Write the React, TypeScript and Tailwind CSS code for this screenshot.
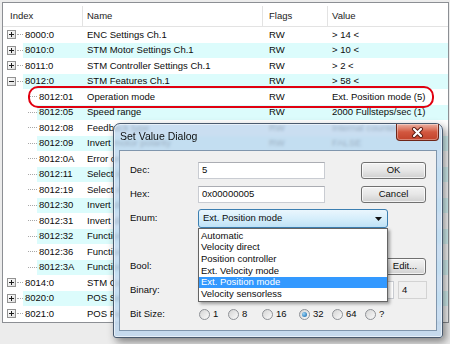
import React from "react";

type Row = { idx: string; name: string; value: string; node?: "+" | "-" };

const rows: Row[] = [
  { idx: "8000:0", name: "ENC Settings Ch.1", value: "> 14 <", node: "+" },
  { idx: "8010:0", name: "STM Motor Settings Ch.1", value: "> 10 <", node: "+" },
  { idx: "8011:0", name: "STM Controller Settings Ch.1", value: "> 2 <", node: "+" },
  { idx: "8012:0", name: "STM Features Ch.1", value: "> 58 <", node: "-" },
  { idx: "8012:01", name: "Operation mode", value: "Ext. Position mode (5)" },
  { idx: "8012:05", name: "Speed range", value: "2000 Fullsteps/sec (1)" },
  { idx: "8012:08", name: "Feedback type", value: "Internal counter (1)" },
  { idx: "8012:09", name: "Invert motor polarity", value: "FALSE" },
  { idx: "8012:0A", name: "Error on step lost counter", value: "FALSE" },
  { idx: "8012:11", name: "Select info data 1", value: "Motor coil voltage A (13)" },
  { idx: "8012:19", name: "Select info data 2", value: "Motor coil voltage B (14)" },
  { idx: "8012:30", name: "Invert digital input 1", value: "FALSE" },
  { idx: "8012:31", name: "Invert digital input 2", value: "FALSE" },
  { idx: "8012:32", name: "Function for input 1", value: "Normal input (0)" },
  { idx: "8012:36", name: "Function for input 2", value: "Normal input (0)" },
  { idx: "8012:3A", name: "Function for input 2", value: "Normal input (0)" },
  { idx: "8014:0", name: "STM Controller Settings 2 Ch.1", value: "> 12 <", node: "+" },
  { idx: "8020:0", name: "POS Settings Ch.1", value: "> 16 <", node: "+" },
  { idx: "8021:0", name: "POS Features Ch.1", value: "> 6 <", node: "+" },
];

const enumItems = [
  "Automatic",
  "Velocity direct",
  "Position controller",
  "Ext. Velocity mode",
  "Ext. Position mode",
  "Velocity sensorless",
];

const TreeBox = ({ open }: { open: boolean }) => (
  <span className="relative flex h-[9px] w-[9px] items-center justify-center border border-[#929292] bg-linear-to-br from-white to-[#dedede]">
    <span className="absolute h-px w-[5px] bg-[#1c1c1c]" />
    {!open && <span className="absolute h-[5px] w-px bg-[#1c1c1c]" />}
  </span>
);

const ListRow = ({ row, shaded }: { row: Row; shaded: boolean }) => {
  const child = !row.node;
  return (
    <div className="flex h-[15.5px] items-center">
      <div className={`flex h-full shrink-0 items-center ${child ? "w-[34px]" : "w-[20px]"}`}>
        {child ? (
          <span className="ml-[25px] w-[9px] border-t border-dotted border-[#a8a8a8]" />
        ) : (
          <>
            <span className="ml-[4px]">
              <TreeBox open={row.node === "-"} />
            </span>
            <span className="ml-px w-[6px] border-t border-dotted border-[#a8a8a8]" />
          </>
        )}
      </div>
      <div className={`flex h-full flex-1 items-center whitespace-nowrap ${shaded ? "bg-[#dcfcfc]" : ""}`}>
        <span className={`shrink-0 pl-[2px] ${child ? "w-[46px]" : "w-[60px]"}`}>{row.idx}</span>
        <span className="w-[180px] shrink-0 overflow-hidden pl-[4px]">{row.name}</span>
        <span className="w-[65px] shrink-0 pl-[6px]">RW</span>
        <span className="pl-[4px]">{row.value}</span>
      </div>
    </div>
  );
};

const Radio = ({ label, checked, w }: { label: string; checked?: boolean; w: string }) => (
  <span className={`flex items-center ${w}`}>
    <span className="flex h-[11px] w-[11px] items-center justify-center rounded-full border border-[#8e9196] bg-linear-to-br from-[#d4d4d4] to-[#fbfbfb]">
      {checked && <span className="h-[5px] w-[5px] rounded-full bg-[radial-gradient(circle_at_35%_35%,#9ad6f8,#0b5ea6)]" />}
    </span>
    <span className="ml-[3px]">{label}</span>
  </span>
);

const btn =
  "flex h-[17px] items-center justify-center rounded-[3px] border border-[#707070] bg-linear-to-b from-[#f3f3f3] via-[#e6e6e6] to-[#d0d0d0] shadow-[inset_0_0_0_1px_rgba(255,255,255,0.7)]";

export default function App() {
  return (
    <div className="relative h-[344px] w-[450px] overflow-hidden bg-[#ececec] font-['Liberation_Sans',Arial,sans-serif] text-[9.5px] text-[#0c0c0c]">
      <div className="ml-[2px] mt-[2px] h-[321px] w-[447px] overflow-hidden border border-[#8c8f94] bg-white">
        <div className="flex h-[24px] items-center border-b border-[#e3e3e3] pt-[3px] text-[#1b1b1b]">
          <span className="flex h-full w-[80px] items-center border-r border-[#e3e3e3] pl-[7px]">Index</span>
          <span className="flex h-full w-[180px] items-center border-r border-[#e3e3e3] pl-[4px]">Name</span>
          <span className="flex h-full w-[65px] items-center border-r border-[#e3e3e3] pl-[6px]">Flags</span>
          <span className="flex h-full items-center pl-[4px]">Value</span>
        </div>
        {rows.map((r, i) => (
          <ListRow key={r.idx + i} row={r} shaded={i % 2 === 1} />
        ))}
      </div>

      {/* red annotation around the selected entry */}
      <div className="absolute left-[28px] top-[86px] h-[22px] w-[406px] rounded-[10px] border-2 border-[#e10010]" />

      {/* Set Value Dialog window */}
      <div className="absolute left-[113px] top-[123px] flex h-[215px] w-[330px] flex-col rounded-t-[7px] rounded-b-[3px] border border-[#4a5a6e] bg-[#bdd6ee]/80 px-[5px] pb-[6px] shadow-[3px_4px_9px_rgba(0,0,0,0.45),inset_0_0_0_1px_rgba(255,255,255,0.55)] backdrop-blur-[1.5px]">
        <div className="flex h-[26px] items-center">
          <span className="pl-[1px] text-[10.5px] text-[#101010]">Set Value Dialog</span>
          <span className="-mr-[2px] ml-auto flex h-[17px] w-[43px] items-center justify-center self-start rounded-b-[4px] border border-t-0 border-[#6e2618] bg-linear-to-b from-[#eab0a2] via-[#d2573f] to-[#c2432b] shadow-[inset_0_0_0_1px_rgba(255,255,255,0.35)]">
            <svg width="13" height="11" viewBox="0 0 13 11">
              <path d="M3 2 L10 9 M10 2 L3 9" stroke="#5a1a10" strokeWidth="4" strokeLinecap="round" />
              <path d="M3 2 L10 9 M10 2 L3 9" stroke="#ffffff" strokeWidth="2.2" strokeLinecap="round" />
            </svg>
          </span>
        </div>

        <div className="flex flex-1 flex-col border border-[#8096ad] bg-[#f0f0f0] pl-[10px] pt-[11px]">
          <div className="flex h-[17px] items-center">
            <span className="w-[68px]">Dec:</span>
            <span className="flex h-full w-[127px] items-center border border-[#c9ccd2] border-t-[#abadb3] bg-white pl-[3px]">5</span>
            <span className={`${btn} ml-[36px] w-[65px] border-[#3c7fb1] from-[#eef8fe] via-[#dcf0fc] to-[#c2e4f8] shadow-[inset_0_0_0_1px_rgba(80,205,250,0.8)]`}>
              OK
            </span>
          </div>
          <div className="mt-[7px] flex h-[17px] items-center">
            <span className="w-[68px]">Hex:</span>
            <span className="flex h-full w-[127px] items-center border border-[#c9ccd2] border-t-[#abadb3] bg-white pl-[3px]">0x00000005</span>
            <span className={`${btn} ml-[36px] w-[65px]`}>Cancel</span>
          </div>
          <div className="mt-[6px] flex h-[19px] items-center">
            <span className="w-[68px]">Enum:</span>
            <div className="relative z-10 h-full w-[190px]">
              <div className="flex h-full items-center rounded-[3px] border border-[#3c7fb1] bg-linear-to-b from-[#eaf6fd] via-[#d6eefb] to-[#bfe2f6] pl-[4px] pr-[5px]">
                <span>Ext. Position mode</span>
                <svg className="ml-auto" width="7" height="4" viewBox="0 0 7 4">
                  <path d="M0 0 H7 L3.5 4 Z" fill="#111" />
                </svg>
              </div>
              <div className="absolute left-0 top-full w-[190px] border border-[#646464] bg-white py-px shadow-[2px_2px_3px_rgba(0,0,0,0.35)]">
                {enumItems.map((t, i) => (
                  <div key={t} className={`flex h-[11.7px] items-center pl-[2px] ${i === 4 ? "bg-[#3399ff] text-white" : ""}`}>
                    {t}
                  </div>
                ))}
              </div>
            </div>
          </div>
          <div className="mt-[30px] flex h-[16px] items-center">
            <span className="w-[68px]">Bool:</span>
            <span className={`${btn} ml-[182px] w-[46px]`}>
              <span className="ml-[4px]">Edit...</span>
            </span>
          </div>
          <div className="mt-[7px] flex h-[18px] items-center">
            <span className="w-[68px]">Binary:</span>
            <span className="h-full w-[196px] border border-[#c9ccd2] bg-white" />
            <span className="ml-[4px] flex h-full w-[29px] items-center border border-[#d3d3d3] bg-[#f0f0f0] pl-[3px]">4</span>
          </div>
          <div className="mt-[9px] flex h-[12px] items-center">
            <span className="w-[69px]">Bit Size:</span>
            <Radio label="1" w="w-[29px]" />
            <Radio label="8" w="w-[34px]" />
            <Radio label="16" w="w-[37px]" />
            <Radio label="32" checked w="w-[33px]" />
            <Radio label="64" w="w-[33px]" />
            <Radio label="?" w="w-[20px]" />
          </div>
        </div>
      </div>
    </div>
  );
}
